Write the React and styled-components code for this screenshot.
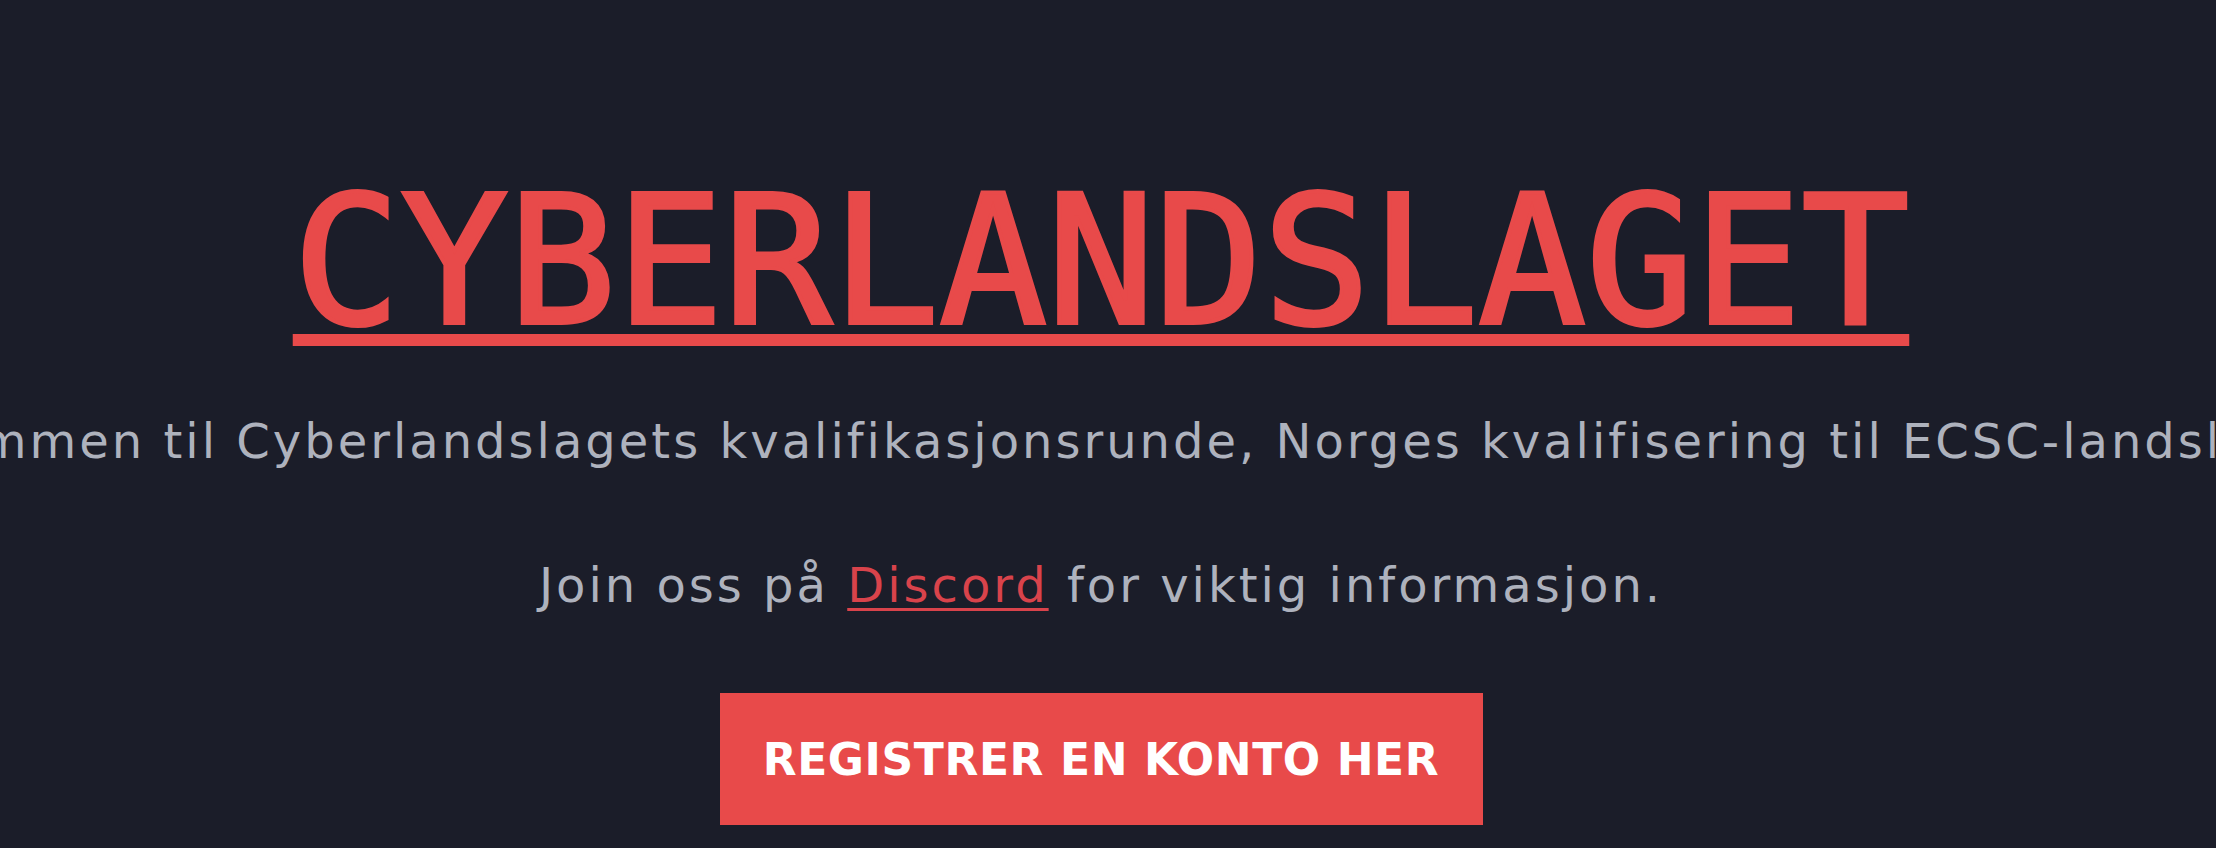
import React from "react";
import styled, {createGlobalStyle} from "styled-components";

const GlobalStyle = createGlobalStyle`
    html, body {
        margin: 0;
        padding: 0;
        background: #1b1d29;
        overflow: hidden;
    }
`;

const Page = styled.main`
    width: 100vw;
    height: 848px;
    display: flex;
    flex-direction: column;
    align-items: center;
    padding: 172px 14px 0 0;
    box-sizing: border-box;
    overflow: hidden;
    font-family: "DejaVu Sans", "Noto Sans", sans-serif;
`;

const Title = styled.h1`
    margin: 0;
    font-family: "DejaVu Sans Mono", "Liberation Mono", monospace;
    font-size: 179px;
    font-weight: 400;
    line-height: 1;
    color: #e84a4a;
    -webkit-text-stroke: 4px #e84a4a;
    text-decoration: underline;
    text-decoration-thickness: 12px;
    text-underline-offset: 11px;
`;

const Lead = styled.p`
    margin: 56px 0 0;
    width: 100%;
    display: flex;
    justify-content: center;
    white-space: nowrap;
    font-size: 48px;
    letter-spacing: 3px;
    line-height: 69px;
    color: #aeb2bd;
`;

const Note = styled.p`
    margin: 75px 0 0;
    font-size: 48px;
    letter-spacing: 3px;
    line-height: 69px;
    color: #aeb2bd;
`;

const Link = styled.a`
    color: #d9434b;
    text-decoration: underline;
    text-decoration-thickness: 3px;
    text-underline-offset: 6px;
`;

const Button = styled.a`
    margin-top: 73px;
    width: 763px;
    height: 132px;
    display: flex;
    align-items: center;
    justify-content: center;
    background: #e84a4a;
    color: #fff;
    font-size: 44px;
    font-weight: 700;
    letter-spacing: 0.6px;
    text-transform: uppercase;
    text-decoration: none;
`;

export default function App() {
    return (
        <>
            <GlobalStyle />
            <Page>
                <Title>CYBERLANDSLAGET</Title>
                <Lead>
                    Velkommen til Cyberlandslagets kvalifikasjonsrunde, Norges kvalifisering til ECSC-landslaget!
                </Lead>
                <Note>
                    Join oss på <Link href="#">Discord</Link> for viktig informasjon.
                </Note>
                <Button href="#">Registrer en konto her</Button>
            </Page>
        </>
    );
}
